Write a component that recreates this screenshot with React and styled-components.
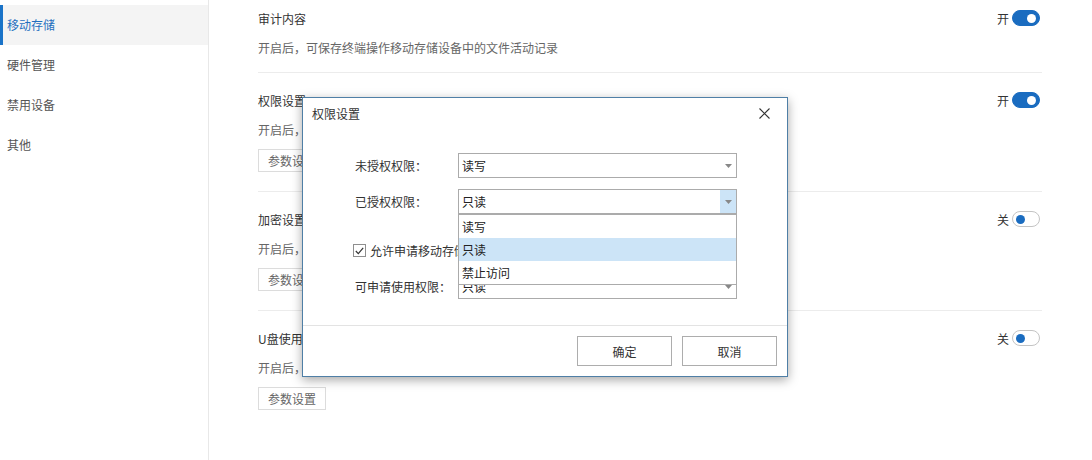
import styled, { createGlobalStyle } from 'styled-components';

const GlobalStyle = createGlobalStyle`
  * { box-sizing: border-box; }
  html, body { margin: 0; padding: 0; background: #fff; overflow: hidden; }
  body {
    font-family: "Noto Sans CJK SC", "Noto Sans", "Liberation Sans", sans-serif;
    font-size: 12px;
    color: #333;
  }
`;

const menu = ['移动存储', '硬件管理', '禁用设备', '其他'];

const sections = [
  { title: '审计内容', desc: '开启后，可保存终端操作移动存储设备中的文件活动记录', on: true, button: false },
  { title: '权限设置', desc: '开启后，可对终端使用移动存储设备的读写权限进行控制', on: true, button: true },
  { title: '加密设置', desc: '开启后，拷贝至移动存储设备中的文件将自动进行加密', on: false, button: true },
  { title: 'U盘使用记录', desc: '开启后，可记录终端使用U盘的详细情况', on: false, button: true },
];

const options = ['读写', '只读', '禁止访问'];

const Arrow = () => (
  <svg width="7" height="4" viewBox="0 0 7 4">
    <path d="M0 0 L7 0 L3.5 4 Z" fill="#888" />
  </svg>
);

const App = () => {
  return (
    <Page>
      <GlobalStyle />
      <Sidebar>
        {menu.map((m, i) => (
          <MenuItem key={m} $active={i === 0}>{m}</MenuItem>
        ))}
      </Sidebar>

      <Main>
        {sections.map((s) => (
          <Section key={s.title}>
            <TitleRow>
              <SectionTitle>{s.title}</SectionTitle>
              <SwitchWrap>
                <span>{s.on ? '开' : '关'}</span>
                <Switch $on={s.on}>
                  <Knob $on={s.on} />
                </Switch>
              </SwitchWrap>
            </TitleRow>
            <Desc>{s.desc}</Desc>
            {s.button && <ParamButton>参数设置</ParamButton>}
          </Section>
        ))}
      </Main>

      <Dialog>
        <DialogHeader>
          <DialogTitle>权限设置</DialogTitle>
          <CloseButton>
            <svg width="11" height="11" viewBox="0 0 11 11">
              <path d="M0.5 0.5 L10.5 10.5 M10.5 0.5 L0.5 10.5" stroke="#333" strokeWidth="1.1" />
            </svg>
          </CloseButton>
        </DialogHeader>

        <DialogBody>
          <FormRow>
            <Label>未授权权限：</Label>
            <SelectBox>
              <span>读写</span>
              <ArrowBox>
                <Arrow />
              </ArrowBox>
            </SelectBox>
          </FormRow>

          <FormRow $gap={11}>
            <Label>已授权权限：</Label>
            <SelectBox>
              <span>只读</span>
              <ArrowBox $focus>
                <Arrow />
              </ArrowBox>
              <OptionList>
                {options.map((o) => (
                  <OptionItem key={o} $selected={o === '只读'}>{o}</OptionItem>
                ))}
              </OptionList>
            </SelectBox>
          </FormRow>

          <CheckRow>
            <CheckBox>
              <svg width="9" height="8" viewBox="0 0 9 8">
                <path d="M0.8 4 L3.3 6.6 L8.2 0.8" stroke="#333" strokeWidth="1.2" fill="none" />
              </svg>
            </CheckBox>
            <span>允许申请移动存储设备使用权限</span>
          </CheckRow>

          <FormRow $gap={11}>
            <Label>可申请使用权限：</Label>
            <SelectBox>
              <span>只读</span>
              <ArrowBox>
                <Arrow />
              </ArrowBox>
            </SelectBox>
          </FormRow>
        </DialogBody>

        <DialogFooter>
          <FooterButton>确定</FooterButton>
          <FooterButton>取消</FooterButton>
        </DialogFooter>
      </Dialog>
    </Page>
  );
};

export default App;

//~~~~~~~~~~~~~~~~~~~
// Styled-Components
//~~~~~~~~~~~~~~~~~~~

const Page = styled.div`
  position: relative;
  display: flex;
  width: 1092px;
  height: 460px;
`;

const Sidebar = styled.div`
  width: 209px;
  flex-shrink: 0;
  padding-top: 5px;
  border-right: 1px solid #e8e8e8;
`;

const MenuItem = styled.div`
  height: 40px;
  display: flex;
  align-items: center;
  padding-left: 4px;
  padding-bottom: 2px;
  border-left: 3px solid ${(p) => (p.$active ? '#1a73c8' : 'transparent')};
  background: ${(p) => (p.$active ? '#f4f4f4' : 'transparent')};
  color: ${(p) => (p.$active ? '#1f6fbf' : '#555')};
  font-size: 12px;
`;

const Main = styled.div`
  flex: 1;
  padding: 0 50px 0 49px;
`;

const Section = styled.div`
  padding: 17px 0 19px;
  border-bottom: 1px solid #ececec;

  &:first-child {
    padding: 8px 0 14px;
  }

  &:last-child {
    border-bottom: none;
  }
`;

const TitleRow = styled.div`
  display: flex;
  align-items: center;
  justify-content: space-between;
  height: 20px;
`;

const SectionTitle = styled.div`
  color: #333;
  font-size: 12px;
`;

const SwitchWrap = styled.div`
  display: flex;
  align-items: center;
  gap: 3px;
  color: #333;
  margin-right: 2px;
`;

const Switch = styled.div`
  width: 28px;
  height: 16px;
  border-radius: 8px;
  display: flex;
  align-items: center;
  padding: 0 3px;
  justify-content: ${(p) => (p.$on ? 'flex-end' : 'flex-start')};
  background: ${(p) => (p.$on ? '#1a6cc0' : '#fff')};
  border: 1px solid ${(p) => (p.$on ? '#1a6cc0' : '#c4c4c4')};
`;

const Knob = styled.div`
  width: 9px;
  height: 9px;
  border-radius: 50%;
  background: ${(p) => (p.$on ? '#fff' : '#1a6cc0')};
`;

const Desc = styled.div`
  margin-top: 10px;
  line-height: 20px;
  color: #666;
  font-size: 12px;
`;

const ParamButton = styled.button`
  margin-top: 9px;
  height: 23px;
  padding: 0 9px;
  border: 1px solid #dcdcdc;
  background: #fff;
  color: #666;
  font-family: inherit;
  font-size: 12px;
  display: block;
`;

const Dialog = styled.div`
  position: absolute;
  left: 302px;
  top: 97px;
  width: 486px;
  display: flex;
  flex-direction: column;
  background: #fff;
  border: 1px solid #4f7fa6;
  box-shadow: 0 3px 10px rgba(0, 0, 0, 0.35);
`;

const DialogHeader = styled.div`
  height: 30px;
  display: flex;
  align-items: center;
  justify-content: space-between;
  padding: 0 17px 0 9px;
`;

const DialogTitle = styled.div`
  font-size: 12px;
  color: #333;
`;

const CloseButton = styled.div`
  display: flex;
  align-items: center;
`;

const DialogBody = styled.div`
  padding: 25px 0 26px 52px;
  border-bottom: 1px solid #e3e3e3;
`;

const FormRow = styled.div`
  display: flex;
  align-items: center;
  margin-top: ${(p) => p.$gap || 0}px;
`;

const Label = styled.div`
  width: 103px;
  color: #333;
  font-size: 12px;
`;

const SelectBox = styled.div`
  position: relative;
  width: 279px;
  height: 25px;
  border: 1px solid #ababab;
  display: flex;
  align-items: center;
  justify-content: space-between;
  padding-left: 3px;
  color: #222;
  font-size: 12px;
`;

const ArrowBox = styled.div`
  width: 16px;
  height: 100%;
  display: flex;
  align-items: center;
  justify-content: center;
  background: ${(p) => (p.$focus ? '#cce4f7' : 'transparent')};
`;

const OptionList = styled.div`
  position: absolute;
  top: 24px;
  left: -1px;
  width: 279px;
  background: #fff;
  border: 1px solid #ababab;
  z-index: 2;
`;

const OptionItem = styled.div`
  height: 23px;
  display: flex;
  align-items: center;
  padding-left: 3px;
  color: #222;
  background: ${(p) => (p.$selected ? '#cce4f7' : '#fff')};
`;

const CheckRow = styled.div`
  display: flex;
  align-items: center;
  gap: 4px;
  height: 25px;
  margin-top: 24px;
  color: #333;
  font-size: 12px;
`;

const CheckBox = styled.div`
  width: 13px;
  height: 13px;
  border: 1px solid #8f8f8f;
  display: flex;
  align-items: center;
  justify-content: center;
  margin-left: -2px;
`;

const DialogFooter = styled.div`
  display: flex;
  justify-content: flex-end;
  gap: 10px;
  padding: 10px 10px 10px 0;
`;

const FooterButton = styled.button`
  width: 95px;
  height: 30px;
  border: 1px solid #adadad;
  background: #fff;
  color: #333;
  font-family: inherit;
  font-size: 12px;
`;
